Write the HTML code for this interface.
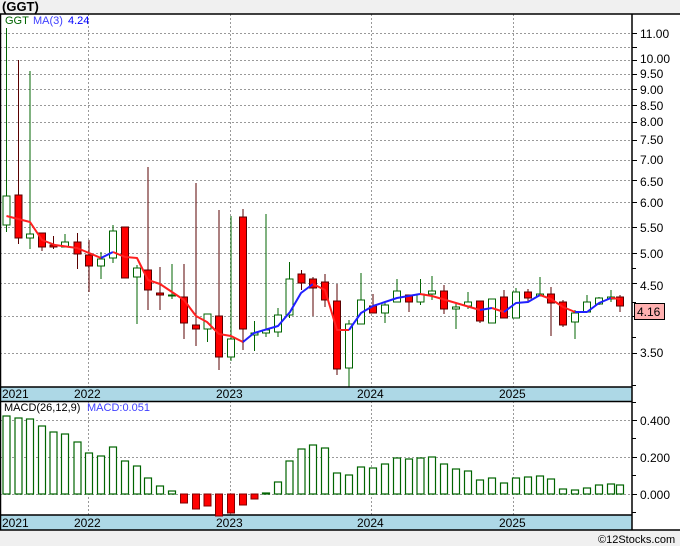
<!DOCTYPE html>
<html><head><meta charset="utf-8"><style>
html,body{margin:0;padding:0;background:#f0f0f0}
svg{display:block;font-family:"Liberation Sans",sans-serif}
.g{stroke:#999;stroke-width:1;stroke-dasharray:2,2}
.c line,.c rect{shape-rendering:crispEdges}
.u line{stroke:#006400}.u rect{fill:#fff;stroke:#006400}
.d line{stroke:#5a0000}.d rect{fill:#f00;stroke:#5a0000}
.t{font-size:12px;fill:#000}
.y{font-size:12px;fill:#000}
</style></head><body>
<svg width="680" height="546" viewBox="0 0 680 546">
<rect x="0" y="0" width="680" height="546" fill="#f0f0f0"/>
<text x="2" y="11" font-size="13" font-weight="bold">(GGT)</text>
<rect x="0" y="14" width="632" height="373" fill="#fff"/>
<rect x="0" y="401" width="632" height="114" fill="#fff"/>
<rect x="632" y="14" width="48" height="516" fill="#fff"/>
<g class="g">
<line x1="0" x2="632" y1="33.5" y2="33.5"/><line x1="0" x2="632" y1="47.5" y2="47.5"/><line x1="0" x2="632" y1="60.5" y2="60.5"/><line x1="0" x2="632" y1="74.5" y2="74.5"/><line x1="0" x2="632" y1="89.5" y2="89.5"/><line x1="0" x2="632" y1="105.5" y2="105.5"/><line x1="0" x2="632" y1="122.5" y2="122.5"/><line x1="0" x2="632" y1="140.5" y2="140.5"/><line x1="0" x2="632" y1="160.5" y2="160.5"/><line x1="0" x2="632" y1="180.5" y2="180.5"/><line x1="0" x2="632" y1="202.5" y2="202.5"/><line x1="0" x2="632" y1="227.5" y2="227.5"/><line x1="0" x2="632" y1="253.5" y2="253.5"/><line x1="0" x2="632" y1="283.5" y2="283.5"/><line x1="0" x2="632" y1="316.5" y2="316.5"/><line x1="0" x2="632" y1="353.5" y2="353.5"/>
<line x1="88.5" x2="88.5" y1="14" y2="387"/><line x1="230.5" x2="230.5" y1="14" y2="387"/><line x1="371.5" x2="371.5" y1="14" y2="387"/><line x1="513.5" x2="513.5" y1="14" y2="387"/>
<line x1="0" x2="632" y1="420.5" y2="420.5"/><line x1="0" x2="632" y1="457.5" y2="457.5"/><line x1="0" x2="632" y1="494.5" y2="494.5"/>
<line x1="88.5" x2="88.5" y1="401" y2="515"/><line x1="230.5" x2="230.5" y1="401" y2="515"/><line x1="371.5" x2="371.5" y1="401" y2="515"/><line x1="513.5" x2="513.5" y1="401" y2="515"/>
</g>
<text x="5" y="24" font-size="11" fill="#006400">GGT</text><text x="33" y="24" font-size="11" fill="#4040ff">MA(3)</text><text x="68" y="24" font-size="11" fill="#0000ff">4.24</text>
<g class="c" stroke-width="1">
<g class="u"><line x1="6.5" x2="6.5" y1="28" y2="232"/><rect x="3" y="196" width="7" height="29"/></g>
<g class="d"><line x1="18.5" x2="18.5" y1="60" y2="244"/><rect x="15" y="195" width="7" height="43"/></g>
<g class="u"><line x1="30" x2="30" y1="71" y2="249"/><rect x="26.5" y="234" width="7" height="4"/></g>
<g class="d"><line x1="42" x2="42" y1="233" y2="251"/><rect x="38.5" y="233" width="7" height="14"/></g>
<g class="d"><line x1="53.5" x2="53.5" y1="236" y2="249"/><rect x="50" y="245" width="7" height="2"/></g>
<g class="u"><line x1="65" x2="65" y1="234" y2="247"/><rect x="61.5" y="242" width="7" height="5"/></g>
<g class="d"><line x1="77.5" x2="77.5" y1="233" y2="269"/><rect x="74" y="242" width="7" height="12"/></g>
<g class="d"><line x1="89" x2="89" y1="240" y2="292"/><rect x="85.5" y="255" width="7" height="11"/></g>
<g class="u"><line x1="101" x2="101" y1="252" y2="279"/><rect x="97.5" y="259" width="7" height="7"/></g>
<g class="u"><line x1="113" x2="113" y1="225" y2="263"/><rect x="109.5" y="231" width="7" height="27"/></g>
<g class="d"><line x1="125" x2="125" y1="227" y2="278"/><rect x="121.5" y="227" width="7" height="51"/></g>
<g class="u"><line x1="137" x2="137" y1="265" y2="324"/><rect x="133.5" y="268" width="7" height="9"/></g>
<g class="d"><line x1="148" x2="148" y1="167" y2="310"/><rect x="144.5" y="270" width="7" height="20"/></g>
<g class="d"><line x1="160" x2="160" y1="267" y2="310"/><rect x="156.5" y="293" width="7" height="2"/></g>
<g class="u"><line x1="172" x2="172" y1="264" y2="299"/><rect x="168.5" y="295" width="7" height="1"/></g>
<g class="d"><line x1="184" x2="184" y1="264" y2="339"/><rect x="180.5" y="297" width="7" height="26"/></g>
<g class="d"><line x1="196" x2="196" y1="183" y2="346"/><rect x="192.5" y="325" width="7" height="4"/></g>
<g class="u"><line x1="207.5" x2="207.5" y1="314" y2="342"/><rect x="204" y="314" width="7" height="15"/></g>
<g class="d"><line x1="219" x2="219" y1="210" y2="370"/><rect x="215.5" y="316" width="7" height="41"/></g>
<g class="u"><line x1="231" x2="231" y1="216" y2="361"/><rect x="227.5" y="339" width="7" height="18"/></g>
<g class="d"><line x1="243" x2="243" y1="209" y2="350"/><rect x="239.5" y="217" width="7" height="112"/></g>
<g class="u"><line x1="254.5" x2="254.5" y1="321" y2="351"/><rect x="251" y="333" width="7" height="2"/></g>
<g class="u"><line x1="266" x2="266" y1="214" y2="337"/><rect x="262.5" y="330" width="7" height="3"/></g>
<g class="u"><line x1="278" x2="278" y1="308" y2="337"/><rect x="274.5" y="315" width="7" height="17"/></g>
<g class="u"><line x1="289.5" x2="289.5" y1="262" y2="318"/><rect x="286" y="279" width="7" height="36"/></g>
<g class="d"><line x1="301.5" x2="301.5" y1="270" y2="290"/><rect x="298" y="274" width="7" height="9"/></g>
<g class="d"><line x1="313" x2="313" y1="277" y2="316"/><rect x="309.5" y="279" width="7" height="9"/></g>
<g class="d"><line x1="325" x2="325" y1="274" y2="307"/><rect x="321.5" y="282" width="7" height="18"/></g>
<g class="d"><line x1="337" x2="337" y1="284" y2="375"/><rect x="333.5" y="301" width="7" height="68"/></g>
<g class="u"><line x1="349" x2="349" y1="320" y2="387"/><rect x="345.5" y="324" width="7" height="44"/></g>
<g class="u"><line x1="361" x2="361" y1="273" y2="324"/><rect x="357.5" y="300" width="7" height="24"/></g>
<g class="d"><line x1="373" x2="373" y1="294" y2="313"/><rect x="369.5" y="306" width="7" height="7"/></g>
<g class="u"><line x1="385" x2="385" y1="303" y2="323"/><rect x="381.5" y="305" width="7" height="8"/></g>
<g class="u"><line x1="397" x2="397" y1="279" y2="302"/><rect x="393.5" y="291" width="7" height="11"/></g>
<g class="d"><line x1="409" x2="409" y1="295" y2="312"/><rect x="405.5" y="295" width="7" height="7"/></g>
<g class="u"><line x1="420.5" x2="420.5" y1="279" y2="305"/><rect x="417" y="294" width="7" height="8"/></g>
<g class="u"><line x1="432" x2="432" y1="276" y2="300"/><rect x="428.5" y="291" width="7" height="3"/></g>
<g class="d"><line x1="444" x2="444" y1="285" y2="314"/><rect x="440.5" y="291" width="7" height="18"/></g>
<g class="u"><line x1="456" x2="456" y1="304" y2="329"/><rect x="452.5" y="307" width="7" height="2"/></g>
<g class="u"><line x1="468" x2="468" y1="292" y2="309"/><rect x="464.5" y="302" width="7" height="4"/></g>
<g class="d"><line x1="480" x2="480" y1="301" y2="323"/><rect x="476.5" y="301" width="7" height="20"/></g>
<g class="u"><line x1="492" x2="492" y1="299" y2="323"/><rect x="488.5" y="299" width="7" height="24"/></g>
<g class="d"><line x1="504" x2="504" y1="290" y2="318"/><rect x="500.5" y="297" width="7" height="21"/></g>
<g class="u"><line x1="516" x2="516" y1="288" y2="318"/><rect x="512.5" y="292" width="7" height="26"/></g>
<g class="d"><line x1="528" x2="528" y1="289" y2="302"/><rect x="524.5" y="292" width="7" height="6"/></g>
<g class="u"><line x1="540" x2="540" y1="277" y2="296"/><rect x="536.5" y="294" width="7" height="2"/></g>
<g class="d"><line x1="551" x2="551" y1="287" y2="336"/><rect x="547.5" y="294" width="7" height="9"/></g>
<g class="d"><line x1="563" x2="563" y1="300" y2="327"/><rect x="559.5" y="302" width="7" height="23"/></g>
<g class="u"><line x1="575" x2="575" y1="310" y2="339"/><rect x="571.5" y="313" width="7" height="9"/></g>
<g class="u"><line x1="587" x2="587" y1="295" y2="312"/><rect x="583.5" y="302" width="7" height="10"/></g>
<g class="u"><line x1="599" x2="599" y1="297" y2="305"/><rect x="595.5" y="298" width="7" height="6"/></g>
<g class="u"><line x1="611" x2="611" y1="290" y2="302"/><rect x="607.5" y="297" width="7" height="2"/></g>
<g class="d"><line x1="620" x2="620" y1="295" y2="312"/><rect x="616.5" y="297" width="7" height="9"/></g>
</g>
<g fill="none" stroke-width="2" stroke-linejoin="round">
<polyline stroke="#ff2020" points="6.5,216 30,222 42,240 55,245 77,248 101,258"/>
<polyline stroke="#2020ff" points="101,258 113,252"/>
<polyline stroke="#ff2020" points="113,252 125,257 137,258 148,280 160,284 184,300 196,316 207,322 219,334 231,336 243,342"/>
<polyline stroke="#2020ff" points="243,342 254,333 278,326 290,312 301,293 313,284"/>
<polyline stroke="#ff2020" points="313,284 325,290 337,330 349,330"/>
<polyline stroke="#2020ff" points="349,330 361,313 373,306 397,298 420,294"/>
<polyline stroke="#ff2020" points="420,294 432,296 456,303 480,310"/>
<polyline stroke="#2020ff" points="480,310 492,308"/>
<polyline stroke="#ff2020" points="492,308 504,312"/>
<polyline stroke="#2020ff" points="504,312 516,303 528,302 540,295"/>
<polyline stroke="#ff2020" points="540,295 551,299 563,307 575,312"/>
<polyline stroke="#2020ff" points="575,312 587,312 599,303 611,298"/>
<polyline stroke="#ff2020" points="611,298 620,299"/>
</g>
<rect x="0" y="387" width="632" height="14" fill="#add8e6"/>
<rect x="0" y="515" width="632" height="15" fill="#add8e6"/>
<g stroke="#000" stroke-width="1.5">
<line x1="0" x2="680" y1="14" y2="14"/>
<line x1="0" x2="632" y1="387" y2="387"/><line x1="0" x2="632" y1="401.5" y2="401.5"/>
<line x1="0" x2="632" y1="515" y2="515"/><line x1="0" x2="680" y1="530" y2="530"/>
<line x1="632" x2="632" y1="14" y2="530"/>
<line x1="0.5" x2="0.5" y1="14" y2="530"/>
</g>
<g class="t"><text x="2" y="398">2021</text><text x="74" y="398">2022</text><text x="216" y="398">2023</text><text x="357" y="398">2024</text><text x="499" y="398">2025</text>
<text x="2" y="527">2021</text><text x="74" y="527">2022</text><text x="216" y="527">2023</text><text x="357" y="527">2024</text><text x="499" y="527">2025</text></g>
<g stroke="#000"><line x1="632" x2="637" y1="33.5" y2="33.5"/><line x1="632" x2="637" y1="47.5" y2="47.5"/><line x1="632" x2="637" y1="60.5" y2="60.5"/><line x1="632" x2="637" y1="74.5" y2="74.5"/><line x1="632" x2="637" y1="89.5" y2="89.5"/><line x1="632" x2="637" y1="105.5" y2="105.5"/><line x1="632" x2="637" y1="122.5" y2="122.5"/><line x1="632" x2="637" y1="140.5" y2="140.5"/><line x1="632" x2="637" y1="160.5" y2="160.5"/><line x1="632" x2="637" y1="180.5" y2="180.5"/><line x1="632" x2="637" y1="202.5" y2="202.5"/><line x1="632" x2="637" y1="227.5" y2="227.5"/><line x1="632" x2="637" y1="253.5" y2="253.5"/><line x1="632" x2="636" y1="268.5" y2="268.5"/><line x1="632" x2="637" y1="283.5" y2="283.5"/><line x1="632" x2="636" y1="302.5" y2="302.5"/><line x1="632" x2="637" y1="316.5" y2="316.5"/><line x1="632" x2="636" y1="337.5" y2="337.5"/><line x1="632" x2="637" y1="353.5" y2="353.5"/><line x1="632" x2="636" y1="385.5" y2="385.5"/>
<line x1="632" x2="636" y1="402.5" y2="402.5"/><line x1="632" x2="637" y1="420.5" y2="420.5"/><line x1="632" x2="636" y1="438.5" y2="438.5"/><line x1="632" x2="637" y1="457.5" y2="457.5"/><line x1="632" x2="636" y1="475.5" y2="475.5"/><line x1="632" x2="637" y1="494.5" y2="494.5"/><line x1="632" x2="636" y1="512.5" y2="512.5"/></g>
<g class="y"><text x="640" y="38">11.00</text><text x="640" y="63">10.00</text><text x="640" y="78">9.50</text><text x="640" y="94">9.00</text><text x="640" y="110">8.50</text><text x="640" y="126">8.00</text><text x="640" y="144">7.50</text><text x="640" y="164">7.00</text><text x="640" y="186">6.50</text><text x="640" y="207">6.00</text><text x="640" y="232">5.50</text><text x="640" y="258">5.00</text><text x="640" y="290">4.50</text><text x="640" y="357">3.50</text>
<text x="640" y="425">0.400</text><text x="640" y="462">0.200</text><text x="640" y="499">0.000</text></g>
<rect x="634.5" y="303.5" width="30" height="16" fill="#ffb0b0" stroke="#000"/>
<text x="637" y="316" font-size="12">4.16</text>
<text x="4" y="411" font-size="11" fill="#000">MACD(26,12,9)</text><text x="87" y="411" font-size="11" fill="#4040ff">MACD:0.051</text>
<g fill="#fff" stroke="#006400" stroke-width="1.2">
<rect x="3" y="416" width="7" height="78"/><rect x="15" y="418" width="7" height="76"/><rect x="26.5" y="419" width="7" height="75"/><rect x="38.5" y="426" width="7" height="68"/><rect x="50" y="432" width="7" height="62"/><rect x="61.5" y="434" width="7" height="60"/><rect x="74" y="442" width="7" height="52"/><rect x="85.5" y="453" width="7" height="41"/><rect x="97.5" y="456" width="7" height="38"/><rect x="109.5" y="447" width="7" height="47"/><rect x="121.5" y="461" width="7" height="33"/><rect x="133.5" y="466" width="7" height="28"/><rect x="144.5" y="478" width="7" height="16"/><rect x="156.5" y="486" width="7" height="8"/><rect x="168.5" y="491" width="7" height="3"/>
<rect x="262.5" y="493" width="7" height="1"/><rect x="274.5" y="482" width="7" height="12"/><rect x="286" y="461" width="7" height="33"/><rect x="298" y="449" width="7" height="45"/><rect x="309.5" y="445" width="7" height="49"/><rect x="321.5" y="448" width="7" height="46"/><rect x="333.5" y="473" width="7" height="21"/><rect x="345.5" y="475" width="7" height="19"/><rect x="357.5" y="467" width="7" height="27"/><rect x="369.5" y="468" width="7" height="26"/><rect x="381.5" y="464" width="7" height="30"/><rect x="393.5" y="458" width="7" height="36"/><rect x="405.5" y="459" width="7" height="35"/><rect x="417" y="458" width="7" height="36"/><rect x="428.5" y="457" width="7" height="37"/><rect x="440.5" y="464" width="7" height="30"/><rect x="452.5" y="469" width="7" height="25"/><rect x="464.5" y="471" width="7" height="23"/><rect x="476.5" y="480" width="7" height="14"/><rect x="488.5" y="478" width="7" height="16"/><rect x="500.5" y="483" width="7" height="11"/><rect x="512.5" y="478" width="7" height="16"/><rect x="524.5" y="477" width="7" height="17"/><rect x="536.5" y="476" width="7" height="18"/><rect x="547.5" y="479" width="7" height="15"/><rect x="559.5" y="489" width="7" height="5"/><rect x="571.5" y="490" width="7" height="4"/><rect x="583.5" y="488" width="7" height="6"/><rect x="595.5" y="485" width="7" height="9"/><rect x="607.5" y="484" width="7" height="10"/><rect x="616.5" y="485" width="7" height="9"/>
</g>
<g fill="#f00" stroke="#800000" stroke-width="1">
<rect x="180.5" y="494" width="7" height="9"/><rect x="192.5" y="494" width="7" height="15"/><rect x="204" y="494" width="7" height="12"/><rect x="215.5" y="494" width="7" height="22"/><rect x="227.5" y="494" width="7" height="19"/><rect x="239.5" y="494" width="7" height="11"/><rect x="251" y="494" width="7" height="5"/>
</g>
<text x="598" y="543" font-size="11" fill="#000">©12Stocks.com</text>
</svg>
</body></html>
